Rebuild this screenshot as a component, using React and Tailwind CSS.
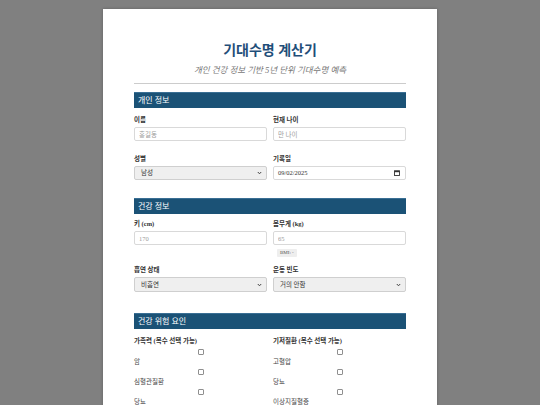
import React from 'react';

const FONT = { fontFamily: '"Liberation Serif", "Noto Sans CJK KR", serif' };

const SectionBar = ({ title }) => (
    <div className="h-[16px] bg-[#1b5276] border-t border-[#3a6f94] flex items-center pl-[4px]">
        <span className="text-[8px] leading-[10px] text-white">{title}</span>
    </div>
);

const Label = ({ children }) => (
    <div className="text-[6.5px] leading-[8px] font-bold text-[#333] mb-[3px] whitespace-nowrap">{children}</div>
);

const TextInput = ({ placeholder }) => (
    <input
        type="text"
        placeholder={placeholder}
        className="block w-full h-[14px] border border-[#d9d9d9] rounded-[2px] bg-white px-[4px] text-[6.5px] text-[#333] placeholder:text-[#9a9a9a] outline-none"
    />
);

const Chevron = () => (
    <svg width="5" height="4" viewBox="0 0 5 4" className="shrink-0">
        <polyline points="0.8,1 2.5,2.8 4.2,1" fill="none" stroke="#444" strokeWidth="1" />
    </svg>
);

const SelectBox = ({ value, height = 'h-[14px]' }) => (
    <div className={`${height} w-full border border-[#cfcfcf] rounded-[2px] bg-[#efefef] flex items-center justify-between pl-[6px] pr-[4px]`}>
        <span className="text-[6.5px] leading-[8px] text-[#333]">{value}</span>
        <Chevron />
    </div>
);

const DateBox = ({ value }) => (
    <div className="h-[14px] w-full border border-[#d9d9d9] rounded-[2px] bg-white flex items-center justify-between pl-[4px] pr-[5px]">
        <span className="text-[6.5px] leading-[8px] text-[#333]">{value}</span>
        <svg width="6" height="6" viewBox="0 0 6 6" className="shrink-0">
            <rect x="0.5" y="0.8" width="5" height="4.7" fill="none" stroke="#333" strokeWidth="0.9" />
            <rect x="0.5" y="0.8" width="5" height="1.4" fill="#333" />
        </svg>
    </div>
);

const CheckItem = ({ label }) => (
    <div className="flex flex-col">
        <div className="flex justify-center">
            <span className="block w-[6px] h-[6px] mt-[1px] border border-[#8f8f8f] rounded-[1px] bg-white" />
        </div>
        <div className="mt-[2px] mb-[1px] text-[6.5px] leading-[10px] text-[#444]">{label}</div>
    </div>
);

export default function App() {
    return (
        <div className="min-h-[405px] bg-[#808080] flex justify-center" style={FONT}>
            <div className="w-[334px] mt-[9px] bg-white shadow-[0_0_3px_rgba(0,0,0,0.25)] px-[31px] pt-[32px] pb-[40px]">
                <h1 className="text-center text-[14px] leading-[20px] font-bold text-[#1f4e79]">기대수명 계산기</h1>
                <p className="mt-[4px] text-center text-[8.5px] leading-[11px] italic text-[#777]">개인 건강 정보 기반 5년 단위 기대수명 예측</p>
                <div className="mt-[7px] h-px bg-[#cccccc]" />

                <div className="mt-[8px]">
                    <SectionBar title="개인 정보" />
                    <div className="mt-[8px] grid grid-cols-2 gap-x-[6px]">
                        <div>
                            <Label>이름</Label>
                            <TextInput placeholder="홍길동" />
                        </div>
                        <div>
                            <Label>현재 나이</Label>
                            <TextInput placeholder="만 나이" />
                        </div>
                    </div>
                    <div className="mt-[14px] grid grid-cols-2 gap-x-[6px]">
                        <div>
                            <Label>성별</Label>
                            <SelectBox value="남성" />
                        </div>
                        <div>
                            <Label>기록일</Label>
                            <DateBox value="09/02/2025" />
                        </div>
                    </div>
                </div>

                <div className="mt-[18px]">
                    <SectionBar title="건강 정보" />
                    <div className="mt-[6px] grid grid-cols-2 gap-x-[6px]">
                        <div>
                            <Label>키 (cm)</Label>
                            <TextInput placeholder="170" />
                        </div>
                        <div>
                            <Label>몸무게 (kg)</Label>
                            <TextInput placeholder="65" />
                            <div className="mt-[4px] ml-[4px] flex">
                                <span className="flex h-[8px] items-center px-[3px] bg-[#eeeeee] rounded-[1px] text-[5px] leading-[6px] text-[#555]">BMI: -</span>
                            </div>
                        </div>
                    </div>
                    <div className="mt-[9px] grid grid-cols-2 gap-x-[6px]">
                        <div>
                            <Label>흡연 상태</Label>
                            <SelectBox value="비흡연" height="h-[15px]" />
                        </div>
                        <div>
                            <Label>운동 빈도</Label>
                            <SelectBox value="거의 안함" height="h-[15px]" />
                        </div>
                    </div>
                </div>

                <div className="mt-[21px]">
                    <SectionBar title="건강 위험 요인" />
                    <div className="mt-[8px] grid grid-cols-2 gap-x-[6px]">
                        <div>
                            <Label>가족력 (복수 선택 가능)</Label>
                            <CheckItem label="암" />
                            <CheckItem label="심혈관질환" />
                            <CheckItem label="당뇨" />
                        </div>
                        <div>
                            <Label>기저질환 (복수 선택 가능)</Label>
                            <CheckItem label="고혈압" />
                            <CheckItem label="당뇨" />
                            <CheckItem label="이상지질혈증" />
                        </div>
                    </div>
                </div>
            </div>
        </div>
    );
}
